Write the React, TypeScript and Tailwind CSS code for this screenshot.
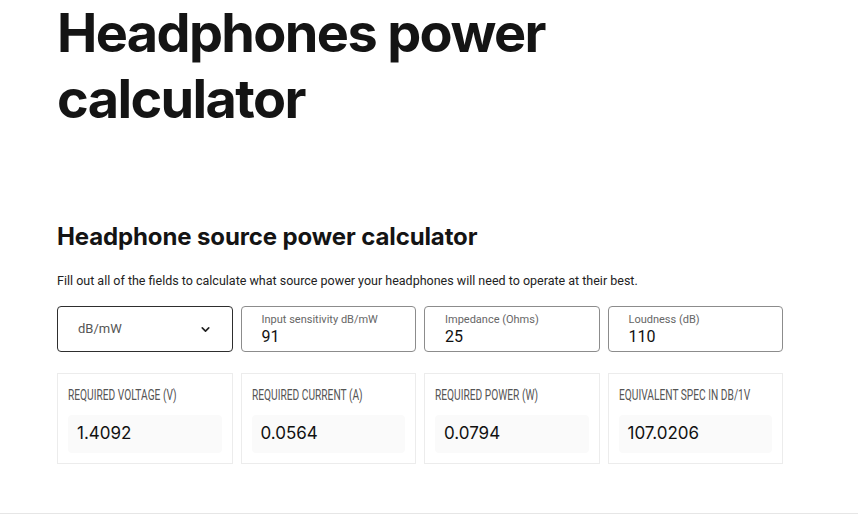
import React from "react";
import { ChevronDown } from "lucide-react";

const inputs = [
  { label: "Input sensitivity dB/mW", value: "91" },
  { label: "Impedance (Ohms)", value: "25" },
  { label: "Loudness (dB)", value: "110" },
];

const results = [
  { label: "REQUIRED VOLTAGE (V)", value: "1.4092" },
  { label: "REQUIRED CURRENT (A)", value: "0.0564" },
  { label: "REQUIRED POWER (W)", value: "0.0794" },
  { label: "EQUIVALENT SPEC IN DB/1V", value: "107.0206" },
];

export default function App() {
  return (
    <div className="w-[858px] h-[527px] bg-white overflow-hidden relative font-['Inter',sans-serif] text-[#111]">
      <div className="px-[57px]">
        <h1 className="text-[54px] leading-[66px] font-bold tracking-[-0.03em] text-[#141414]">
          Headphones power
          <br />
          calculator
        </h1>
        <h2 className="mt-[89px] text-[24px] leading-[32px] font-bold tracking-[-0.005em] text-[#141414]">
          Headphone source power calculator
        </h2>
        <p className="mt-[18px] text-[12.5px] leading-[20px] text-[#222] font-['Roboto',sans-serif]">
          Fill out all of the fields to calculate what source power your headphones will need to operate at their best.
        </p>
        <div className="mt-[15px] w-[726px] grid grid-cols-4 gap-x-[8px]">
          <div className="h-[46px] rounded-[4px] border border-[#2e2e2e] flex items-center justify-between pl-[20px] pr-[20px]">
            <span className="text-[13px] text-[#555] font-['Roboto',sans-serif]">dB/mW</span>
            <ChevronDown size={13} strokeWidth={3} className="text-[#222]" />
          </div>
          {inputs.map((f) => (
            <div
              key={f.label}
              className="h-[46px] rounded-[4px] border border-[#8c8c8c] pl-[20px] pt-[6px] flex flex-col font-['Roboto',sans-serif]"
            >
              <span className="text-[11px] leading-[14px] text-[#666]">{f.label}</span>
              <span className="text-[16px] leading-[19px] text-[#111]">{f.value}</span>
            </div>
          ))}
        </div>
        <div className="mt-[21px] w-[726px] grid grid-cols-4 gap-x-[8px]">
          {results.map((r) => (
            <div
              key={r.label}
              className="h-[91px] border border-[#ececec] px-[10px] pt-[11px] pb-[10px] flex flex-col"
            >
              <span className="block whitespace-nowrap origin-left scale-x-[0.68] text-[15px] leading-[20px] text-[#555] font-['Roboto',sans-serif]">
                {r.label}
              </span>
              <div className="mt-[10px] h-[39px] rounded-[4px] bg-[#fafafa] flex items-center pl-[9px]">
                <span className="text-[17px] text-[#111] font-['Inter',sans-serif]">{r.value}</span>
              </div>
            </div>
          ))}
        </div>
      </div>
      <div className="absolute left-0 right-0 top-[513px] h-px bg-[#e6e6e6]" />
    </div>
  );
}
